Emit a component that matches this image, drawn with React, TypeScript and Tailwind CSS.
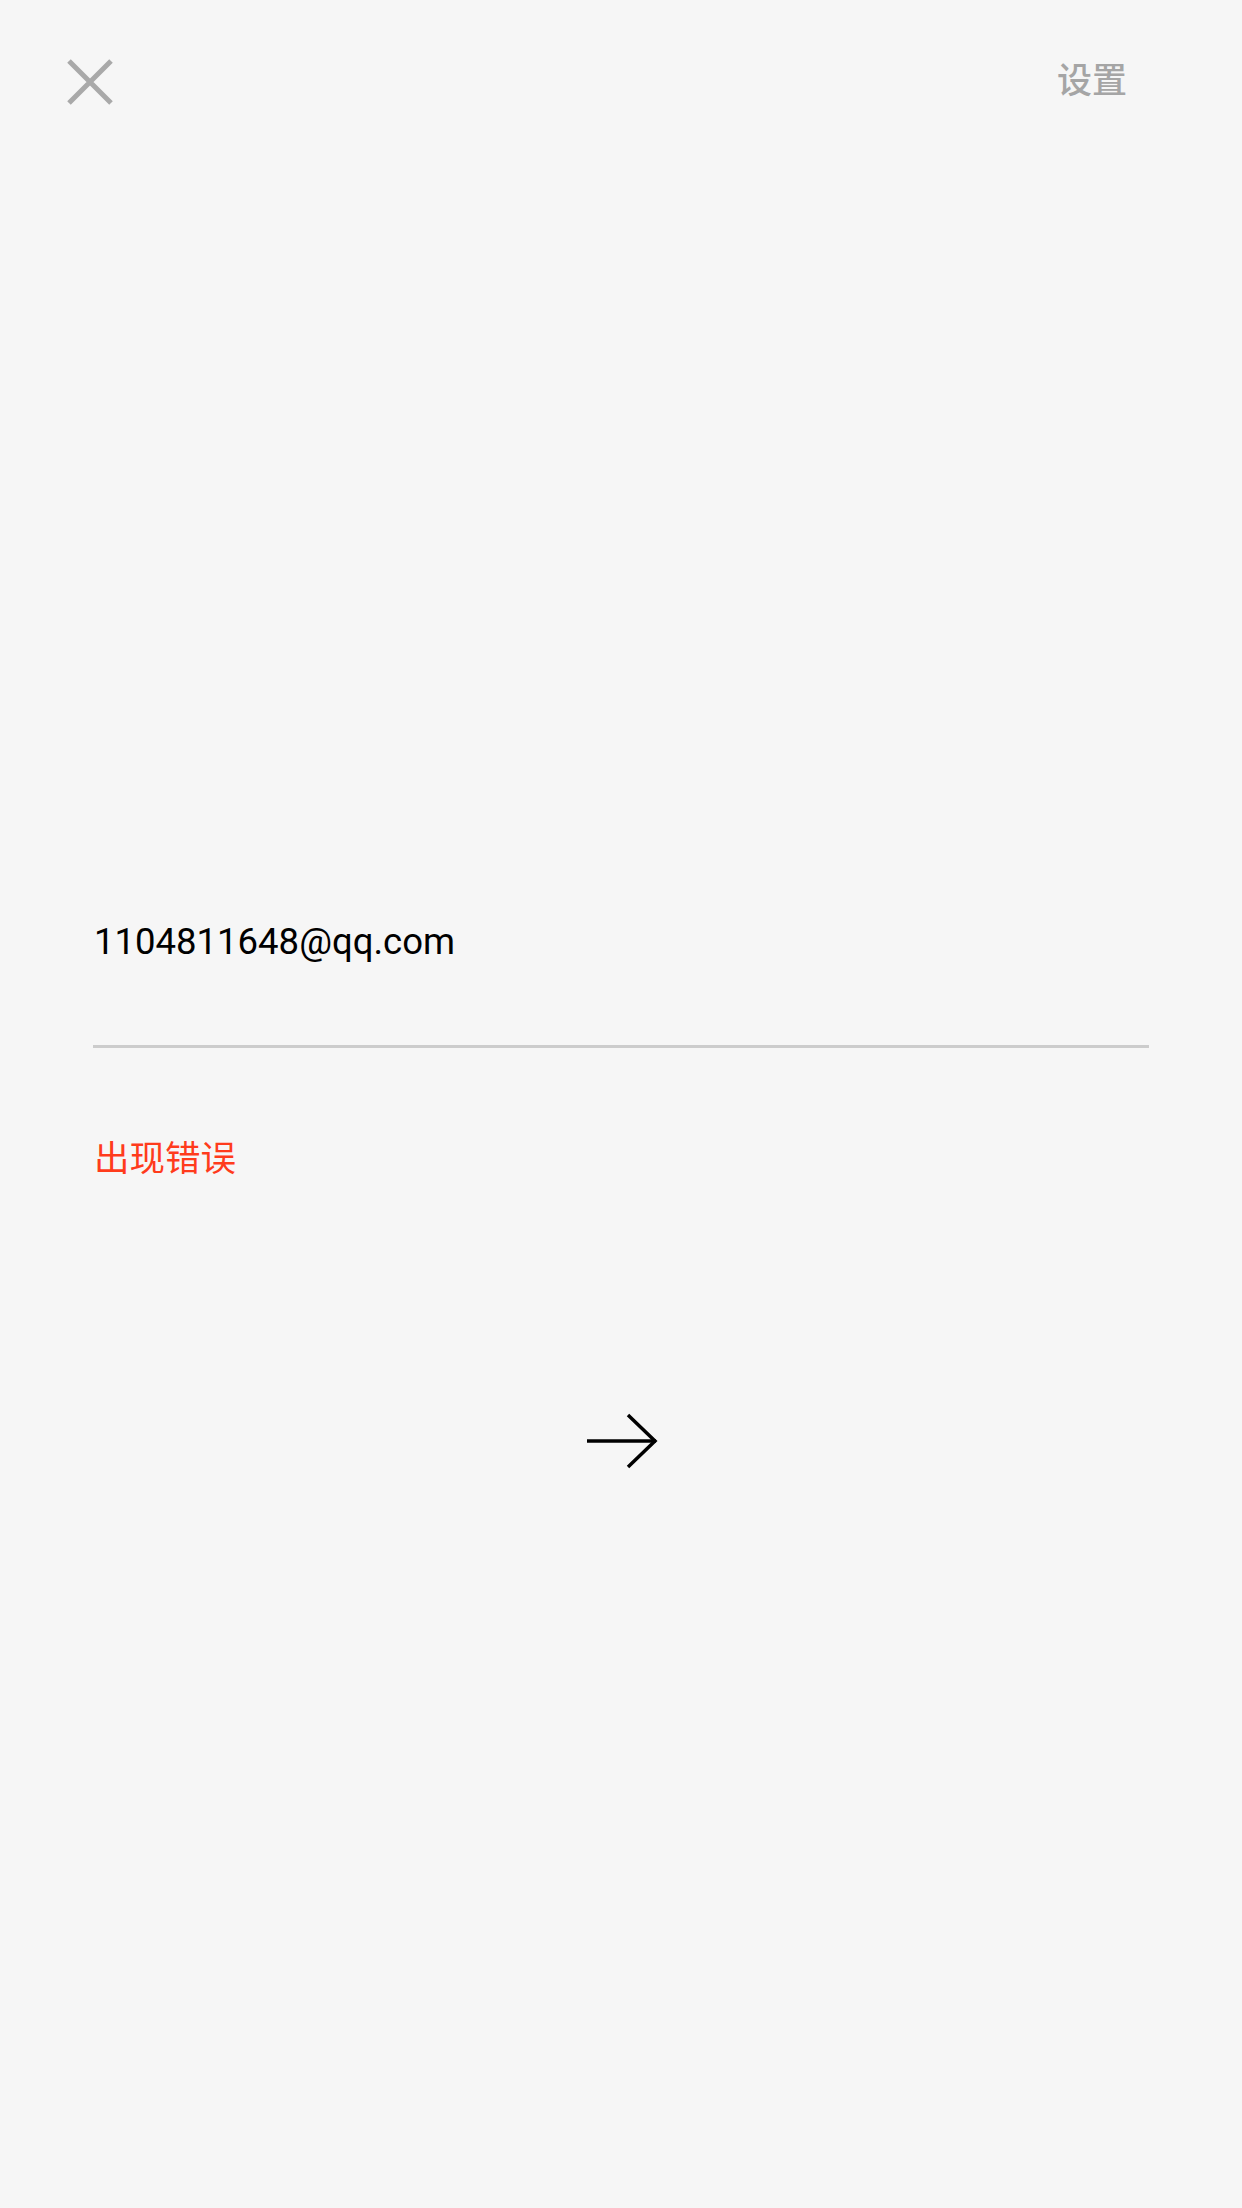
import React from "react";

const cjk = "font-['Roboto','Noto_Sans_CJK_SC',sans-serif]";

function CloseIcon() {
  return (
    <svg width="46" height="46" viewBox="0 0 46 46" fill="none">
      <path
        d="M2 2L44 44M44 2L2 44"
        stroke="#a9a9a9"
        strokeWidth="5"
        strokeLinecap="butt"
      />
    </svg>
  );
}

function ArrowIcon() {
  return (
    <svg width="72" height="56" viewBox="0 0 72 56" fill="none">
      <path d="M0 28H69" stroke="#000" strokeWidth="3.5" />
      <path d="M41 2L68 28L41 54" stroke="#000" strokeWidth="3.5" />
    </svg>
  );
}

export default function App() {
  return (
    <div className={`min-h-[2208px] w-full bg-[#f6f6f6] ${cjk}`}>
      <div className="flex items-center justify-between pl-[67px] pr-[115px] pt-[59px]">
        <button className="flex h-[46px] w-[46px] items-center justify-center">
          <CloseIcon />
        </button>
        <span className="text-[35px] leading-[46px] font-medium text-[#a5a5a5]">
          设置
        </span>
      </div>

      <div className="px-[93px] pt-[815px]">
        <div className="pl-[1px] text-[36.5px] leading-[44px] text-black">
          1104811648@qq.com
        </div>
        <div className="mt-[81px] h-[3px] w-full bg-[#cccccc]" />
        <div className="mt-[91px] pl-[1px] text-[35.5px] leading-[40px] text-[#ff3b1c]">
          出现错误
        </div>
      </div>

      <div className="mt-[234px] flex justify-center pl-[4px]">
        <ArrowIcon />
      </div>
    </div>
  );
}
